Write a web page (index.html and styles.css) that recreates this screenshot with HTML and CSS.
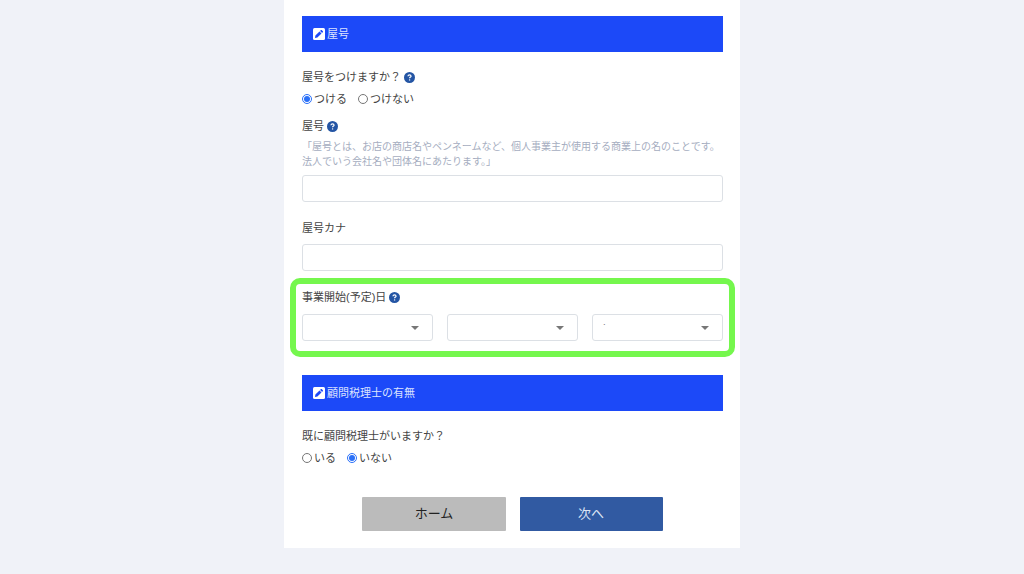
FILE: index.html
```html
<!DOCTYPE html>
<html lang="ja">
<head>
<meta charset="utf-8">
<meta name="viewport" content="width=device-width, initial-scale=1">
<title>屋号</title>
<link rel="stylesheet" href="styles.css">
</head>
<body>
<svg class="sprite" aria-hidden="true">
  <symbol id="edit" viewBox="0 0 12 12">
    <rect width="12" height="12" rx="1.5" fill="#fff"/>
    <path d="M2 10l.4-2.400 4.100-4.100 2 2-4.100 4.100zM7.100 2.900l.8-.8q.4-.4.8 0l1.200 1.200q.4.4 0 .8l-.8.8z" fill="#1c49f8"/>
  </symbol>
  <symbol id="help" viewBox="0 0 12 12">
    <circle cx="6" cy="6" r="6" fill="#2455a4"/>
    <path d="M4.300 4.700C4.400 3.600 5 3.100 6 3.100s1.700.6 1.700 1.400C7.700 5.600 6.100 5.500 6.100 6.900" fill="none" stroke="#fff" stroke-width="1.300"/>
    <circle cx="6.100" cy="8.600" r=".8" fill="#fff"/>
  </symbol>
</svg>
<main class="card">
  <form class="form">
    <h2 class="section-title"><svg class="icon-edit" aria-hidden="true"><use href="#edit"/></svg>屋号</h2>
    <div class="label" id="use-name">屋号をつけますか？<svg class="icon-help" aria-hidden="true"><use href="#help"/></svg></div>
    <div class="choices" role="radiogroup" aria-labelledby="use-name">
      <label class="choice"><input class="radio" type="radio" name="use" checked>つける</label>
      <label class="choice"><input class="radio" type="radio" name="use">つけない</label>
    </div>
    <label class="label label-name" for="name">屋号<svg class="icon-help" aria-hidden="true"><use href="#help"/></svg></label>
    <p class="hint">「屋号とは、お店の商店名やペンネームなど、個人事業主が使用する商業上の名のことです。法人でいう会社名や団体名にあたります。」</p>
    <input class="control" id="name" type="text">
    <label class="label label-kana" for="kana">屋号カナ</label>
    <input class="control control-kana" id="kana" type="text">
    <div class="highlight" role="group" aria-labelledby="start-date">
      <div class="label label-date" id="start-date">事業開始(予定)日<svg class="icon-help" aria-hidden="true"><use href="#help"/></svg></div>
      <div class="dates">
        <select class="control select" aria-label="年"><option></option></select>
        <select class="control select" aria-label="月"><option></option></select>
        <select class="control select" aria-label="日"><option>˙</option></select>
      </div>
    </div>
    <h2 class="section-title"><svg class="icon-edit" aria-hidden="true"><use href="#edit"/></svg>顧問税理士の有無</h2>
    <div class="label" id="advisor">既に顧問税理士がいますか？</div>
    <div class="choices" role="radiogroup" aria-labelledby="advisor">
      <label class="choice"><input class="radio" type="radio" name="advisor">いる</label>
      <label class="choice"><input class="radio" type="radio" name="advisor" checked>いない</label>
    </div>
    <div class="actions">
      <button class="button" type="button">ホーム</button>
      <button class="button button-next" type="button">次へ</button>
    </div>
  </form>
</main>
</body>
</html>
```
FILE: styles.css
```css
* {
  box-sizing: border-box;
}

body {
  margin: 0;
  padding-bottom: 26px;
  background: #f0f2f8;
  color: #444;
  font: 11px/16px "Liberation Sans", "Noto Sans CJK JP", sans-serif;
}

.sprite {
  display: none;
}

.card {
  max-width: 456px;
  margin: 0 auto;
  padding: 16px 17px 17px 18px;
  background: #fff;
}

.form {
  display: flex;
  flex-direction: column;
}

.section-title {
  display: flex;
  align-items: center;
  gap: 2px;
  margin: 0;
  padding: 10px 11px;
  background: #1c49f8;
  color: #dbe3ff;
  font-size: 11px;
  font-weight: 400;
}

.icon-edit {
  width: 12px;
  height: 12px;
}

.icon-help {
  width: 11px;
  height: 11px;
}

.label {
  display: flex;
  align-items: center;
  gap: 3px;
  margin-top: 17px;
}

.label-name {
  margin-top: 11px;
}

.label-kana {
  margin-top: 18px;
}

.label-date {
  margin-top: 0;
}

.choices {
  display: flex;
  gap: 11px;
  margin-top: 6px;
}

.choice {
  display: flex;
  align-items: center;
  gap: 2px;
}

.radio {
  width: 10px;
  height: 10px;
  margin: 0;
  accent-color: #2a70f8;
}

.hint {
  margin: 5px 0 6px;
  color: #a5adc0;
  font-size: 10px;
  line-height: 15px;
}

.control {
  width: 100%;
  height: 27px;
  padding: 0 10px;
  border: 1px solid #dce0e5;
  border-radius: 3px;
  background: #fff;
  color: #777;
  font: inherit;
}

.control-kana {
  margin-top: 8px;
}

.highlight {
  margin: 7px -12px 18px;
  padding: 5px 6px 10px;
  border: 6px solid #75f74d;
  border-radius: 10px;
}

.dates {
  display: grid;
  grid-template-columns: repeat(3, 1fr);
  gap: 14px;
  margin-top: 9px;
}

.select {
  margin: 0;
  appearance: none;
  background: #fff url("data:image/svg+xml,%3Csvg xmlns='http://www.w3.org/2000/svg' width='8' height='4'%3E%3Cpath d='M0 0h8L4 4z' fill='%23777'/%3E%3C/svg%3E") no-repeat right 13px center;
}

.actions {
  display: flex;
  justify-content: center;
  gap: 14px;
  margin-top: 31px;
}

.button {
  width: 34%;
  height: 34px;
  padding: 0;
  border: 0;
  border-radius: 1px;
  background: #bbb;
  color: #222;
  font: inherit;
  font-size: 13px;
}

.button-next {
  background: #315aa2;
  color: #dce5f5;
}
```
